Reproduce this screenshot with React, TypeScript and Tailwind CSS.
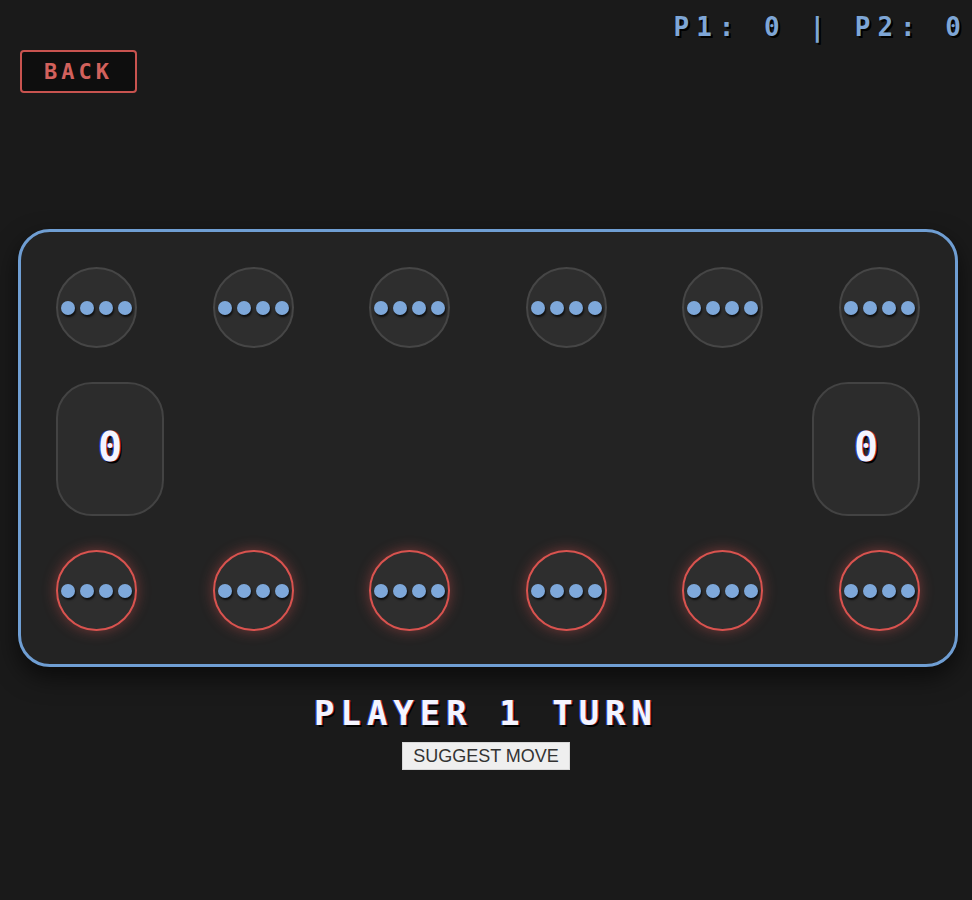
import React from "react";

const PIXEL = { fontFamily: '"DejaVu Sans Mono", "Liberation Mono", monospace' };

const Dots: React.FC<{ count: number }> = ({ count }) => (
  <div className="flex items-center gap-[5px]">
    {Array.from({ length: count }).map((_, i) => (
      <span
        key={i}
        className="block w-[14px] h-[14px] rounded-full bg-[#7ea8da] shadow-[1px_2px_2px_rgba(0,0,0,0.7)]"
      />
    ))}
  </div>
);

const Pit: React.FC<{ seeds: number; active?: boolean }> = ({ seeds, active }) => (
  <div
    className={`w-[81px] h-[81px] rounded-full flex items-center justify-center bg-[#2e2e2e] border-2 ${
      active
        ? "border-[#d9534f] shadow-[0_0_14px_rgba(217,83,79,0.45)]"
        : "border-[#464646]"
    }`}
  >
    <Dots count={seeds} />
  </div>
);

const Store: React.FC<{ value: number }> = ({ value }) => (
  <div className="w-[108px] h-[134px] rounded-[36px] bg-[#2c2c2c] border-2 border-[#434343] flex items-center justify-center">
    <span
      className="text-[40px] leading-none font-bold text-[#f4f4ff] -mt-[4px] [text-shadow:1px_0_0_#b3262b,-1px_0_0_#2a3fb8,2px_2px_0_#000]"
      style={PIXEL}
    >
      {value}
    </span>
  </div>
);

export default function App() {
  const top = [4, 4, 4, 4, 4, 4];
  const bottom = [4, 4, 4, 4, 4, 4];

  return (
    <div className="relative min-h-[900px] bg-[#1a1a1a] overflow-hidden">
      {/* Score */}
      <div
        className="absolute top-[14px] right-[4px] text-[26px] leading-none font-bold tracking-[7px] text-[#7ea6d6] whitespace-pre [text-shadow:2px_2px_0_#000]"
        style={PIXEL}
      >
        P1: 0 | P2: 0
      </div>

      <div className="pt-[50px] pl-[20px]">
        <button
          className="w-[117px] h-[43px] rounded-[4px] border-2 border-[#c8534f] bg-[#0e0e0e] text-[#d2615c] text-[22px] font-bold tracking-[4px] leading-none"
          style={PIXEL}
        >
          BACK
        </button>
      </div>

      {/* Board */}
      <div className="ml-[18px] mt-[136px] w-[940px] h-[438px] rounded-[32px] border-[3px] border-[#6f9ed3] bg-[#232323] p-[35px] shadow-[0_10px_25px_rgba(0,0,0,0.6)] flex flex-col gap-[34px]">
        <div className="flex justify-between">
          {top.map((s, i) => (
            <Pit key={i} seeds={s} />
          ))}
        </div>
        <div className="flex justify-between">
          <Store value={0} />
          <Store value={0} />
        </div>
        <div className="flex justify-between">
          {bottom.map((s, i) => (
            <Pit key={i} seeds={s} active />
          ))}
        </div>
      </div>

      <div className="flex flex-col items-center">
        <h2
          className="mt-[29px] text-[34px] leading-none font-bold tracking-[6px] text-[#f4f4ff] [text-shadow:-1px_0_0_#3b55c8,1px_0_0_#b3262b,2px_2px_0_#000]"
          style={PIXEL}
        >
          PLAYER 1 TURN
        </h2>
        <button
          className="mt-[12px] h-[28px] px-[10px] bg-[#efefef] border border-[#d8d8d8] text-[#333] text-[18px] leading-none"
          style={{ fontFamily: '"Liberation Sans", Arial, sans-serif' }}
        >
          SUGGEST MOVE
        </button>
      </div>
    </div>
  );
}
